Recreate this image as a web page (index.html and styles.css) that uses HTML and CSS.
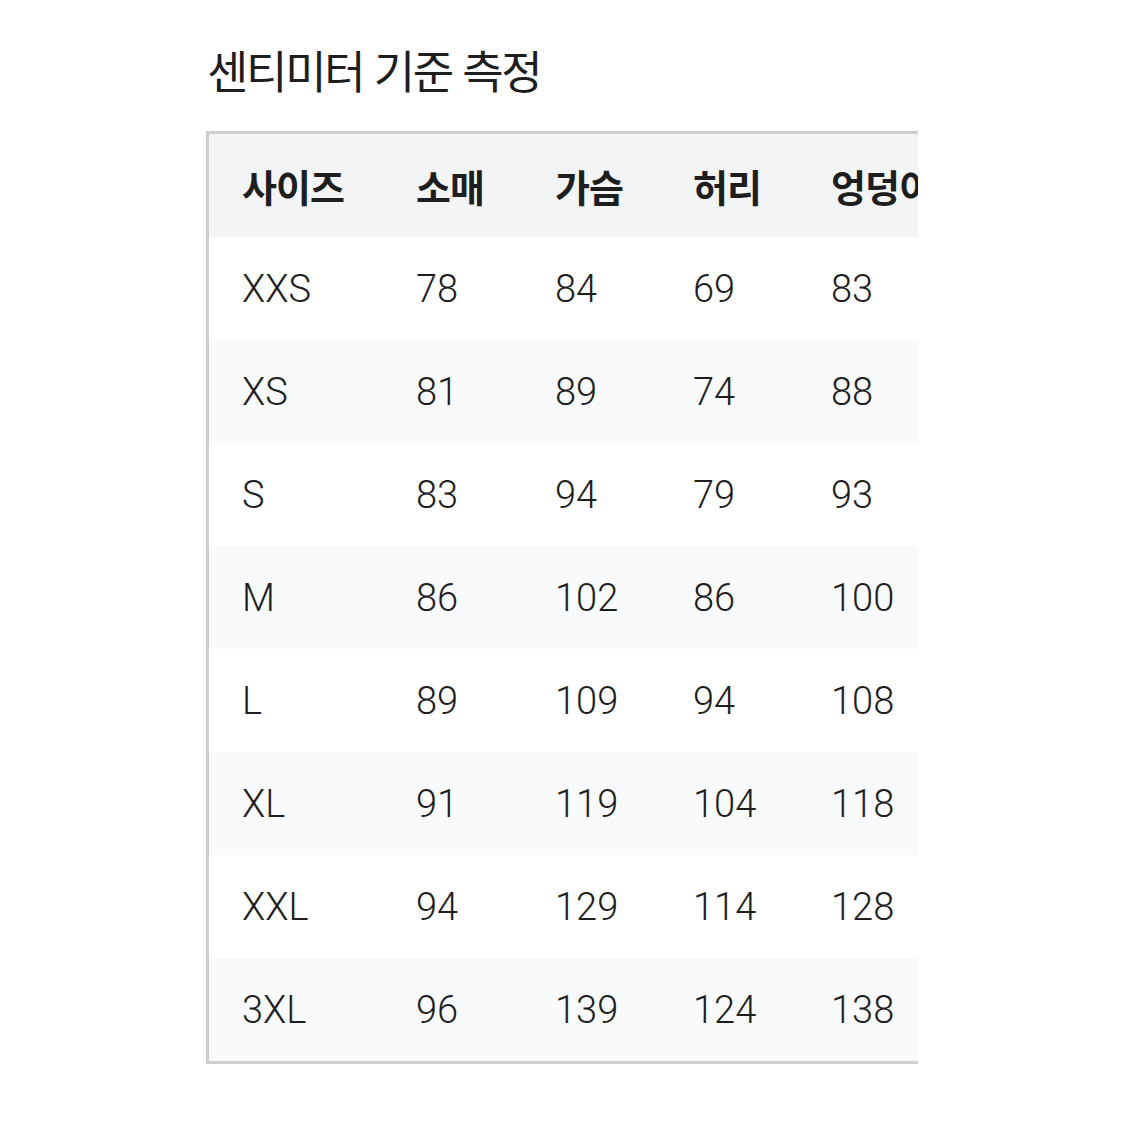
FILE: index.html
```html
<!DOCTYPE html>
<html lang="ko">
<head>
<meta charset="utf-8">
<link rel="stylesheet" href="styles.css">
</head>
<body>
<main class="page">
  <h2 class="title">센티미터 기준 측정</h2>
  <div class="table-wrap">
    <table class="size-table">
      <thead>
        <tr><th>사이즈</th><th>소매</th><th>가슴</th><th>허리</th><th>엉덩이</th></tr>
      </thead>
      <tbody>
        <tr><td>XXS</td><td>78</td><td>84</td><td>69</td><td>83</td></tr>
        <tr><td>XS</td><td>81</td><td>89</td><td>74</td><td>88</td></tr>
        <tr><td>S</td><td>83</td><td>94</td><td>79</td><td>93</td></tr>
        <tr><td>M</td><td>86</td><td>102</td><td>86</td><td>100</td></tr>
        <tr><td>L</td><td>89</td><td>109</td><td>94</td><td>108</td></tr>
        <tr><td>XL</td><td>91</td><td>119</td><td>104</td><td>118</td></tr>
        <tr><td>XXL</td><td>94</td><td>129</td><td>114</td><td>128</td></tr>
        <tr><td>3XL</td><td>96</td><td>139</td><td>124</td><td>138</td></tr>
      </tbody>
    </table>
  </div>
</main>
</body>
</html>
```
FILE: styles.css
```css
html, body {
  margin: 0;
  padding: 0;
  background: #ffffff;
}
.page {
  padding: 40px 0 0 206px;
  color: #1e1e1e;
  font-family: Roboto, "Noto Sans CJK KR", sans-serif;
}
.title {
  margin: 0 0 31px 1px;
  font-family: "Noto Sans CJK KR", sans-serif;
  font-weight: 400;
  font-size: 45px;
  line-height: 60px;
  letter-spacing: -2.3px;
  color: #1e1e1e;
}
.table-wrap {
  width: 712px;
  overflow: hidden;
}
.size-table {
  border-collapse: collapse;
  border-left: 3px solid #cfcfcf;
  border-top: 3px solid #cfcfcf;
  border-bottom: 3px solid #cfcfcf;
  white-space: nowrap;
  table-layout: fixed;
  width: 900px;
}
.size-table th,
.size-table td {
  text-align: left;
  padding: 0 0 0 33px;
  height: 103px;
  vertical-align: middle;
}
.size-table th:nth-child(1), .size-table td:nth-child(1) { width: 141px; }
.size-table th:nth-child(2), .size-table td:nth-child(2) { width: 106px; }
.size-table th:nth-child(3), .size-table td:nth-child(3) { width: 105px; }
.size-table th:nth-child(4), .size-table td:nth-child(4) { width: 105px; }
.size-table th {
  background: #f3f4f6;
  font-family: "Noto Sans CJK KR", sans-serif;
  font-weight: 700;
  font-size: 38px;
  letter-spacing: -1px;
  color: #1e1e1e;
}
.size-table td {
  font-size: 38px;
  font-weight: 300;
  color: #1e1e1e;
}
.size-table tbody tr:nth-child(even) td {
  background: #f9fafb;
}
```
